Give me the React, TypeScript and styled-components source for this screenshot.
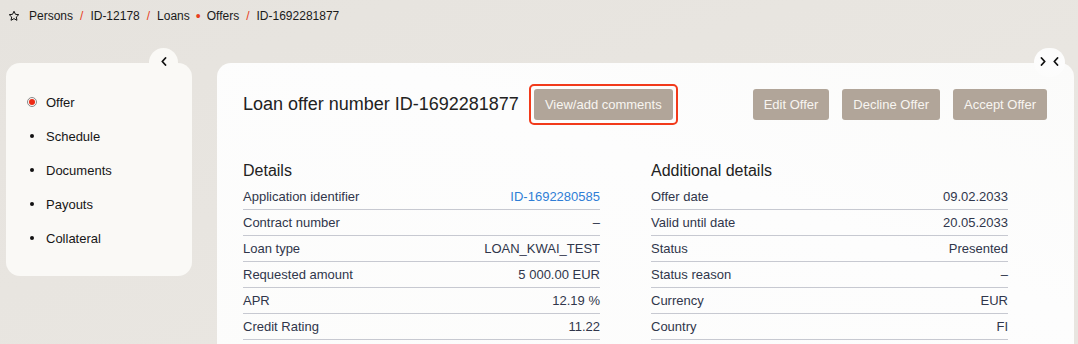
import React from "react";
import styled, { createGlobalStyle } from "styled-components";

const GlobalStyle = createGlobalStyle`
  html, body {
    margin: 0;
    padding: 0;
    background: linear-gradient(160deg, #e6e3de 0%, #e9e6e1 60%, #e8e5e0 100%);
    font-family: "Liberation Sans", Arial, sans-serif;
    color: #1d1d1f;
    overflow: hidden;
  }
`;

const Page = styled.div`
  width: 1078px;
  height: 344px;
  overflow: hidden;
`;

const Breadcrumbs = styled.nav`
  height: 32px;
  display: flex;
  align-items: center;
  padding-left: 8px;
  font-size: 12px;
  color: #1a1a1a;
`;

const Crumb = styled.span`
  white-space: nowrap;
`;

const Sep = styled.span<{ $dot?: boolean }>`
  color: #e8401c;
  margin: 0 ${(p) => (p.$dot ? 6 : 7)}px;
  font-size: ${(p) => (p.$dot ? "14px" : "12px")};
  line-height: 1;
`;

const StarWrap = styled.span`
  display: flex;
  width: 12px;
  height: 12px;
  margin-right: 9px;
`;

const Layout = styled.div`
  display: flex;
  align-items: flex-start;
  gap: 25px;
  padding: 31px 4px 0 6px;
`;

const Sidebar = styled.aside`
  position: relative;
  width: 186px;
  flex-shrink: 0;
  box-sizing: border-box;
  padding: 22px 0 21px 20px;
  background: #faf9f6;
  border-radius: 14px;
`;

const Toggle = styled.button<{ $right?: number }>`
  position: absolute;
  top: -15px;
  right: ${(p) => p.$right ?? 14}px;
  height: 29px;
  min-width: 29px;
  padding: 0 6px 2px;
  border: none;
  border-radius: 15px;
  background: inherit;
  display: flex;
  align-items: center;
  justify-content: center;
  gap: 7px;
  cursor: pointer;
`;

const NavList = styled.ul`
  list-style: none;
  margin: 0;
  padding: 0;
`;

const NavItem = styled.li`
  height: 34px;
  display: flex;
  align-items: center;
  font-size: 13px;
  color: #161616;
`;

const Marker = styled.span`
  width: 12px;
  margin-right: 8px;
  display: flex;
  justify-content: center;
  align-items: center;
`;

const Radio = styled.span`
  width: 8px;
  height: 8px;
  border-radius: 50%;
  border: 1px solid #8a8a8a;
  display: flex;
  align-items: center;
  justify-content: center;
  &::after {
    content: "";
    width: 6px;
    height: 6px;
    border-radius: 50%;
    background: #ee2a14;
  }
`;

const Bullet = styled.span`
  width: 4px;
  height: 4px;
  border-radius: 50%;
  background: #111;
`;

const Main = styled.section`
  position: relative;
  flex: 1;
  height: 320px;
  box-sizing: border-box;
  padding: 26px 27px 0 26px;
  background: linear-gradient(200deg, #fbfbfa 0%, #fdfdfd 40%, #fcfcfb 100%);
  border-radius: 14px;
`;

const TitleRow = styled.div`
  display: flex;
  align-items: center;
  height: 31px;
`;

const Title = styled.h1`
  margin: 0;
  font-size: 18px;
  font-weight: 400;
  color: #222;
  white-space: nowrap;
`;

const Highlight = styled.div`
  margin-left: 10px;
  padding: 3px;
  border: 2px solid #f23a1b;
  border-radius: 5px;
  display: flex;
`;

const Actions = styled.div`
  margin-left: auto;
  display: flex;
  gap: 13px;
`;

const Button = styled.button`
  height: 31px;
  padding: 0 11px;
  border: none;
  border-radius: 3px;
  background: #b1a599;
  color: #f8f5f1;
  font-family: "Liberation Sans", Arial, sans-serif;
  font-size: 13px;
  white-space: nowrap;
  cursor: pointer;
`;

const Columns = styled.div`
  display: grid;
  grid-template-columns: 357px 357px;
  column-gap: 51px;
  margin-top: 41px;
`;

const SectionTitle = styled.h2`
  margin: 0 0 3px;
  font-size: 16px;
  line-height: 20px;
  font-weight: 400;
  color: #222;
`;

const Row = styled.div`
  height: 26px;
  box-sizing: border-box;
  display: flex;
  align-items: center;
  justify-content: space-between;
  border-bottom: 1px solid #c7c9d1;
  font-size: 13px;
  color: #30364b;
  padding-bottom: 1px;
`;

const Value = styled.span<{ $link?: boolean }>`
  color: ${(p) => (p.$link ? "#2f7ed6" : "#30364b")};
`;

const Star = () => (
  <svg width="12" height="12" viewBox="0 0 24 24" fill="none" stroke="#111" strokeWidth="2" strokeLinejoin="round">
    <path d="M12 2.5l2.9 6.1 6.6.8-4.9 4.6 1.3 6.6L12 17.3l-5.9 3.3 1.3-6.6-4.9-4.6 6.6-.8z" />
  </svg>
);

const Chevron = ({ dir }: { dir: "left" | "right" }) => (
  <svg width="6" height="9" viewBox="0 0 6 9" fill="none" stroke="#111" strokeWidth="1.8" strokeLinecap="round" strokeLinejoin="round">
    {dir === "left" ? <path d="M4.5 1L1.3 4.5 4.5 8" /> : <path d="M1.5 1l3.2 3.5L1.5 8" />}
  </svg>
);

const details: [string, string, boolean?][] = [
  ["Application identifier", "ID-1692280585", true],
  ["Contract number", "–"],
  ["Loan type", "LOAN_KWAI_TEST"],
  ["Requested amount", "5 000.00 EUR"],
  ["APR", "12.19 %"],
  ["Credit Rating", "11.22"],
];

const additional: [string, string][] = [
  ["Offer date", "09.02.2033"],
  ["Valid until date", "20.05.2033"],
  ["Status", "Presented"],
  ["Status reason", "–"],
  ["Currency", "EUR"],
  ["Country", "FI"],
];

const nav = ["Offer", "Schedule", "Documents", "Payouts", "Collateral"];

export default function App() {
  return (
    <Page>
      <GlobalStyle />
      <Breadcrumbs>
        <StarWrap>
          <Star />
        </StarWrap>
        <Crumb>Persons</Crumb>
        <Sep>/</Sep>
        <Crumb>ID-12178</Crumb>
        <Sep>/</Sep>
        <Crumb>Loans</Crumb>
        <Sep $dot>•</Sep>
        <Crumb>Offers</Crumb>
        <Sep>/</Sep>
        <Crumb>ID-1692281877</Crumb>
      </Breadcrumbs>
      <Layout>
        <Sidebar>
          <Toggle $right={14} aria-label="Collapse">
            <Chevron dir="left" />
          </Toggle>
          <NavList>
            {nav.map((item, i) => (
              <NavItem key={item}>
                <Marker>{i === 0 ? <Radio /> : <Bullet />}</Marker>
                {item}
              </NavItem>
            ))}
          </NavList>
        </Sidebar>
        <Main>
          <Toggle $right={9} aria-label="Toggle panel">
            <Chevron dir="right" />
            <Chevron dir="left" />
          </Toggle>
          <TitleRow>
            <Title>Loan offer number ID-1692281877</Title>
            <Highlight>
              <Button>View/add comments</Button>
            </Highlight>
            <Actions>
              <Button>Edit Offer</Button>
              <Button>Decline Offer</Button>
              <Button>Accept Offer</Button>
            </Actions>
          </TitleRow>
          <Columns>
            <div>
              <SectionTitle>Details</SectionTitle>
              {details.map(([label, value, link]) => (
                <Row key={label}>
                  <span>{label}</span>
                  <Value $link={link}>{value}</Value>
                </Row>
              ))}
            </div>
            <div>
              <SectionTitle>Additional details</SectionTitle>
              {additional.map(([label, value]) => (
                <Row key={label}>
                  <span>{label}</span>
                  <Value>{value}</Value>
                </Row>
              ))}
            </div>
          </Columns>
        </Main>
      </Layout>
    </Page>
  );
}
